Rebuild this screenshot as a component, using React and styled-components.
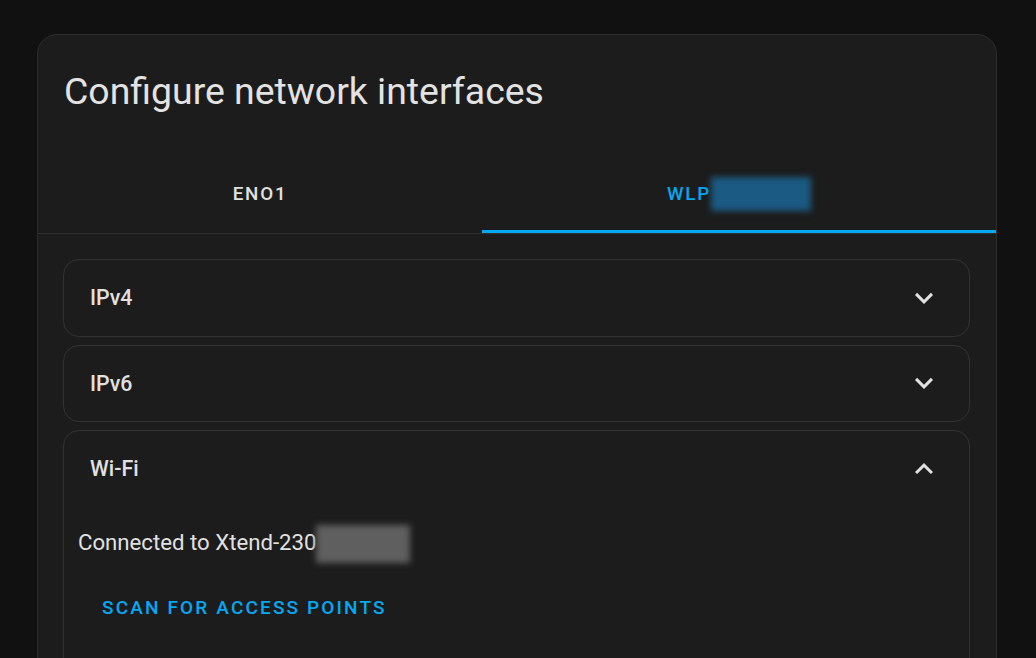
import React from 'react';
import styled, { createGlobalStyle } from 'styled-components';

const GlobalStyle = createGlobalStyle`
    html, body {
        margin: 0;
        height: 658px;
        overflow: hidden;
        background-color: #111111;
        font-family: Roboto, "Liberation Sans", sans-serif;
        -webkit-font-smoothing: antialiased;
    }
`;

const Page = styled.div`
    padding: 34px 0 0 37px;
`;

const Dialog = styled.section`
    width: 960px;
    box-sizing: border-box;
    background-color: #1c1c1c;
    border: 1px solid #2c2c2c;
    border-radius: 20px;
    padding-bottom: 120px;
`;

const Title = styled.h2`
    margin: 0;
    padding: 34px 26px 0;
    font-size: 37.4px;
    line-height: 44px;
    font-weight: 400;
    color: #e3e3e3;
`;

const Tabs = styled.div`
    display: grid;
    grid-template-columns: 444px 1fr;
    margin-top: 42px;
    border-bottom: 1px solid #2f2f2f;
`;

const Tab = styled.button`
    position: relative;
    display: flex;
    align-items: center;
    justify-content: center;
    height: 78px;
    padding: 0;
    border: 0;
    background: none;
    font-family: inherit;
    font-size: 18.8px;
    font-weight: 500;
    letter-spacing: 1.8px;
    color: ${({ $active }) => ($active ? '#03a9f4' : '#e1e1e1')};
    cursor: pointer;

    &::after {
        content: "";
        display: ${({ $active }) => ($active ? 'block' : 'none')};
        position: absolute;
        left: 0;
        right: 0;
        bottom: 0;
        height: 3px;
        background-color: #03a9f4;
    }
`;

// 가려진(블러 처리된) 부분
const Redacted = styled.span`
    display: inline-block;
    width: ${({ $w }) => $w}px;
    height: ${({ $h }) => $h}px;
    vertical-align: middle;
    background-color: ${({ $color }) => $color};
    filter: blur(3px);
`;

const Panels = styled.div`
    display: flex;
    flex-direction: column;
    gap: 8px;
    padding: 25px 26px 0 25px;
`;

const Panel = styled.div`
    border: 1px solid #323232;
    border-radius: 16px;
    padding-bottom: ${({ $open }) => ($open ? '200px' : '0')};
`;

const PanelHeader = styled.div`
    display: flex;
    align-items: center;
    justify-content: space-between;
    height: 75.5px;
    padding: 0 27px 0 26px;
    font-size: 21.3px;
    font-weight: 500;
    color: #e1e1e1;
    cursor: pointer;
`;

const Chevron = styled.svg`
    width: 36px;
    height: 36px;
    fill: #e1e1e1;
`;

const PanelContent = styled.div`
    padding: 18px 14px 0;
`;

const Status = styled.p`
    margin: 0;
    font-size: 22.2px;
    line-height: 32px;
    color: #e1e1e1;
`;

const TextButton = styled.button`
    display: block;
    height: 48px;
    margin: 21px 0 0 14px;
    padding: 0 10px;
    border: 0;
    background: none;
    font-family: inherit;
    font-size: 19px;
    font-weight: 500;
    letter-spacing: 2.15px;
    color: #03a9f4;
    cursor: pointer;
`;

const ChevronIcon = ({ up }) => (
    <Chevron viewBox="0 0 24 24">
        {up
            ? <path d="M7.41,15.41L12,10.83L16.59,15.41L18,14L12,8L6,14L7.41,15.41Z" />
            : <path d="M7.41,8.58L12,13.17L16.59,8.58L18,10L12,16L6,10L7.41,8.58Z" />}
    </Chevron>
);

const App = () => {
    return (
        <Page>
            <GlobalStyle />
            <Dialog>
                <Title>Configure network interfaces</Title>

                <Tabs>
                    <Tab>ENO1</Tab>
                    <Tab $active>
                        WLP<Redacted $w={100} $h={34} $color="#1b5a82" />
                    </Tab>
                </Tabs>

                <Panels>
                    <Panel>
                        <PanelHeader>
                            IPv4
                            <ChevronIcon />
                        </PanelHeader>
                    </Panel>
                    <Panel>
                        <PanelHeader>
                            IPv6
                            <ChevronIcon />
                        </PanelHeader>
                    </Panel>
                    <Panel $open>
                        <PanelHeader>
                            Wi-Fi
                            <ChevronIcon up />
                        </PanelHeader>
                        <PanelContent>
                            <Status>
                                Connected to Xtend-230<Redacted $w={94} $h={38} $color="#5f5f5f" />
                            </Status>
                            <TextButton>SCAN FOR ACCESS POINTS</TextButton>
                        </PanelContent>
                    </Panel>
                </Panels>
            </Dialog>
        </Page>
    );
};

export default App;
